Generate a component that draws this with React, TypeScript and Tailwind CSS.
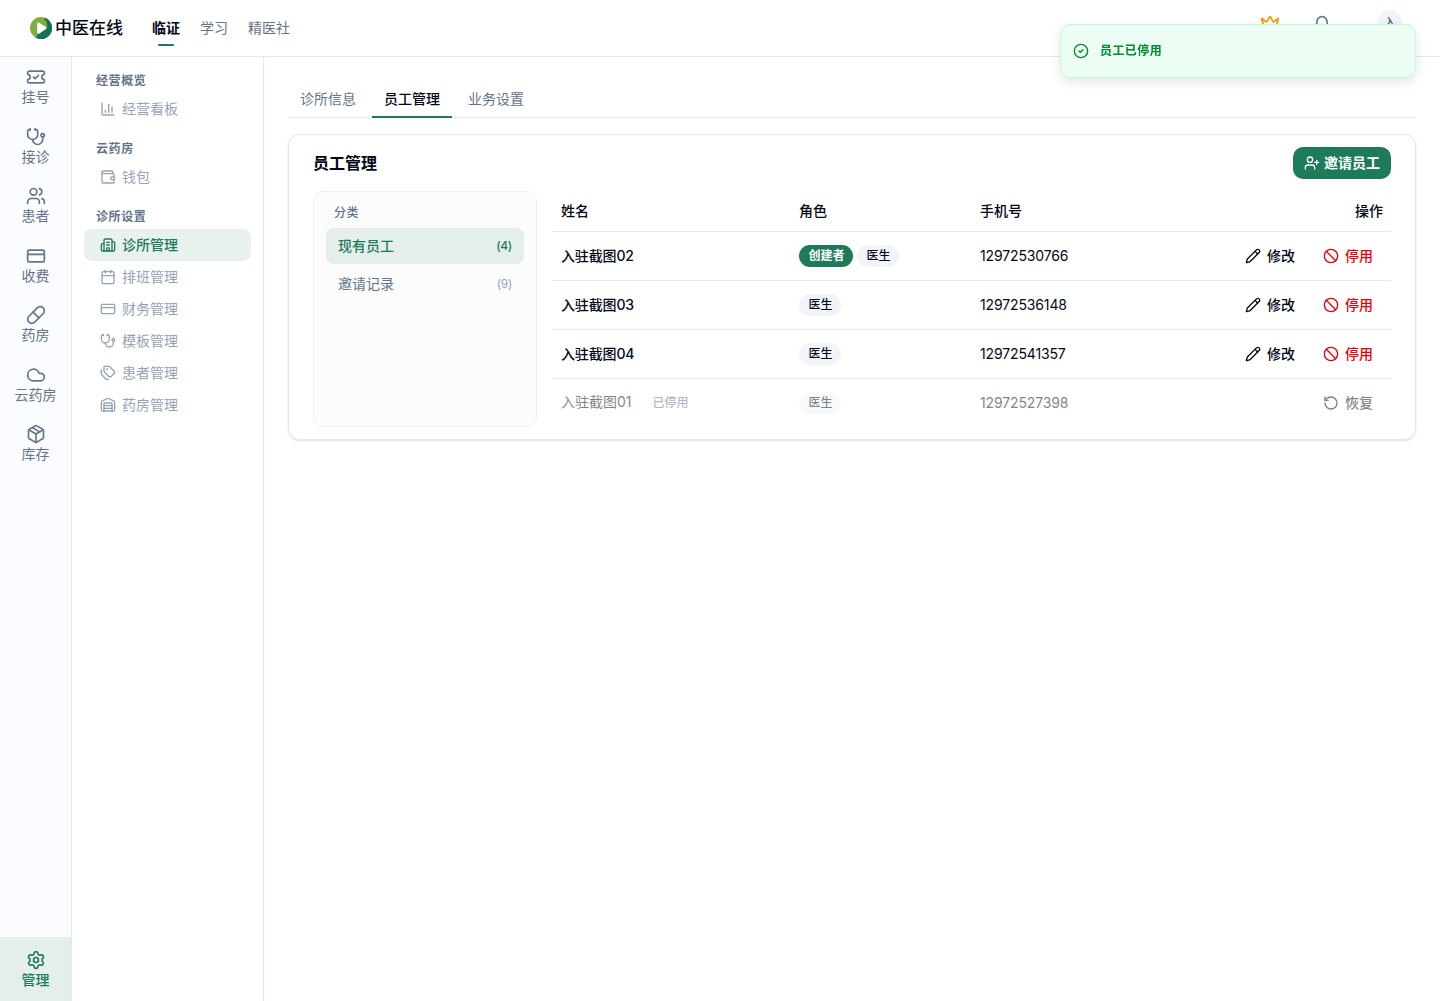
import {
  Ban,
  Bell,
  Building2,
  Calendar,
  ChartColumn,
  CircleCheck,
  Cloud,
  CreditCard,
  Crown,
  Package,
  Pencil,
  Pill,
  RotateCcw,
  Settings,
  Stethoscope,
  Tags,
  TicketCheck,
  UserPlus,
  Users,
  Wallet,
  Warehouse,
  type LucideIcon,
} from "lucide-react";
import clsx from "clsx";

const railItems: { label: string; icon: LucideIcon }[] = [
  { label: "挂号", icon: TicketCheck },
  { label: "接诊", icon: Stethoscope },
  { label: "患者", icon: Users },
  { label: "收费", icon: CreditCard },
  { label: "药房", icon: Pill },
  { label: "云药房", icon: Cloud },
  { label: "库存", icon: Package },
];

const menuSections: {
  title: string;
  items: { label: string; icon: LucideIcon; active?: boolean }[];
}[] = [
  { title: "经营概览", items: [{ label: "经营看板", icon: ChartColumn }] },
  { title: "云药房", items: [{ label: "钱包", icon: Wallet }] },
  {
    title: "诊所设置",
    items: [
      { label: "诊所管理", icon: Building2, active: true },
      { label: "排班管理", icon: Calendar },
      { label: "财务管理", icon: CreditCard },
      { label: "模板管理", icon: Stethoscope },
      { label: "患者管理", icon: Tags },
      { label: "药房管理", icon: Warehouse },
    ],
  },
];

const staff = [
  { name: "入驻截图02", owner: true, phone: "12972530766" },
  { name: "入驻截图03", phone: "12972536148" },
  { name: "入驻截图04", phone: "12972541357" },
  { name: "入驻截图01", phone: "12972527398", disabled: true },
];

function Logo() {
  return (
    <svg viewBox="0 0 22 22" className="size-[22px]">
      <circle cx="11" cy="11" r="11" fill="#7fae42" />
      <path
        d="M15.5 1A11 11 0 1 1 5.6 20.6C7.2 19.8 7.7 18 7.4 16L17 11C17.6 7 17 3.4 13.8 2.2Z"
        fill="#12705a"
      />
      <path
        d="M7.2 6.6c0-1 1-1.4 1.8-.9l7 4.4c.8.5.8 1.5 0 2l-7 4.6c-.8.5-1.8.1-1.8-.9z"
        fill="#fff"
      />
    </svg>
  );
}

function Header() {
  return (
    <header className="flex h-[57px] shrink-0 items-center border-b border-[#e2e8f0] bg-white pl-[30px] pr-[38px]">
      <div className="flex items-center gap-[3px]">
        <Logo />
        <span className="w-[68px] whitespace-nowrap text-[17px] font-medium leading-6">
          中医在线
        </span>
      </div>
      <nav className="ml-[29px] flex gap-5 text-sm text-[#64748b]">
        <div className="relative font-semibold text-[#020817]">
          临证
          <span className="absolute -bottom-2 left-1/2 h-0.5 w-4 -translate-x-1/2 rounded-full bg-[#1d7b5a]" />
        </div>
        <div>学习</div>
        <div>精医社</div>
      </nav>
      <div className="mb-3 ml-auto flex items-center">
        <Crown className="mt-1 size-5 text-[#ff9800]" />
        <Bell className="ml-8 mt-1.5 size-5 text-[#64748b]" />
        <div className="ml-[46px] flex size-6 items-center justify-center rounded-full bg-[#f1f5f9] pt-0.5 text-xs text-[#334155]">
          入
        </div>
      </div>
    </header>
  );
}

function Rail() {
  return (
    <aside className="flex w-[72px] shrink-0 flex-col border-r border-[#e2e8f0] bg-[#fafcff] text-sm text-[#64748b]">
      {railItems.map(({ label, icon: Icon }) => (
        <div key={label} className="flex h-[59.5px] flex-col items-center pt-2.5">
          <Icon className="size-5" />
          <span className="leading-[19.5px]">{label}</span>
        </div>
      ))}
      <div className="mt-auto flex h-16 flex-col items-center bg-[#e4eeeb] pt-[13px] font-medium text-[#1d7b5a]">
        <Settings className="size-5" />
        <span className="leading-5">管理</span>
      </div>
    </aside>
  );
}

function SideMenu() {
  return (
    <aside className="flex w-48 shrink-0 flex-col gap-2.5 border-r border-[#e2e8f0] bg-white px-3 pt-2.5">
      {menuSections.map((section) => (
        <div key={section.title}>
          <div className="flex h-[26px] items-center px-3 pt-0.5 text-xs font-semibold tracking-wider text-[#64748b]">
            {section.title}
          </div>
          {section.items.map(({ label, icon: Icon, active }) => (
            <div
              key={label}
              className={clsx(
                "flex h-8 items-center gap-1.5 rounded-lg px-4 text-sm",
                active ? "bg-[#e8f1ee] font-medium text-[#1d7b5a]" : "text-[#94a3b8]",
              )}
            >
              <Icon className="size-4" />
              {label}
            </div>
          ))}
        </div>
      ))}
    </aside>
  );
}

function Tabs() {
  return (
    <div className="flex h-[37px] gap-1 border-b border-[#e2e8f0] text-sm text-[#64748b]">
      <div className="px-3 pt-2">诊所信息</div>
      <div className="h-[37px] border-b-2 border-[#1d7b5a] px-3 pt-2 font-medium text-[#020817]">
        员工管理
      </div>
      <div className="px-3 pt-2">业务设置</div>
    </div>
  );
}

function Categories() {
  return (
    <div className="h-[236px] w-56 shrink-0 rounded-[10px] border border-[#edf1f6] bg-[#fcfcfd] px-3 text-sm">
      <div className="flex h-9 items-center px-2 pt-1.5 text-xs font-medium tracking-wider text-[#64748b]">
        分类
      </div>
      <div className="flex h-9 items-center justify-between rounded-lg bg-[#e4eeeb] px-3 font-medium text-[#1d7b5a]">
        现有员工
        <span className="text-xs tracking-tight">(4)</span>
      </div>
      <div className="mt-0.5 flex h-9 items-center justify-between px-3 text-[#64748b]">
        邀请记录
        <span className="text-xs tracking-tight text-[#94a3b8]">(9)</span>
      </div>
    </div>
  );
}

function Action({ icon: Icon, label, danger }: { icon: LucideIcon; label: string; danger?: boolean }) {
  return (
    <button
      className={clsx("flex h-8 items-center gap-1.5 px-2.5 font-medium", danger && "text-[#e7000b]")}
    >
      <Icon className="size-4" />
      {label}
    </button>
  );
}

function StaffTable() {
  return (
    <table className="h-[236px] w-[838px] table-fixed border-separate border-spacing-0 text-left text-sm">
      <colgroup>
        <col className="w-[238px]" />
        <col className="w-[181px]" />
        <col className="w-[200px]" />
        <col />
      </colgroup>
      <thead>
        <tr className="h-[41px] [&>th]:border-b [&>th]:border-[#e2e8f0] [&>th]:px-2 [&>th]:font-medium">
          <th>姓名</th>
          <th>角色</th>
          <th>手机号</th>
          <th className="text-right">操作</th>
        </tr>
      </thead>
      <tbody>
        {staff.map((row) => (
          <tr
            key={row.name}
            className={clsx(
              "[&>td]:border-[#e2e8f0] [&>td]:px-2",
              row.disabled ? "h-12 opacity-50" : "h-[49px] [&>td]:border-b",
            )}
          >
            <td className={row.disabled ? "pb-0.5" : "font-medium tracking-[-0.01em]"}>
              {row.name}
              {row.disabled && (
                <span className="ml-[21px] text-xs font-medium text-[#64748b]">已停用</span>
              )}
            </td>
            <td>
              <div className="flex gap-1 text-xs leading-4">
                {row.owner && (
                  <span className="h-[22px] w-[54px] rounded-full bg-[#1d7b5a] pl-px pt-[3px] text-center font-bold text-white">
                    创建者
                  </span>
                )}
                <span className="h-[22px] w-[42px] rounded-full bg-[#f1f5f9] pl-px pt-[3px] text-center font-medium">
                  医生
                </span>
              </div>
            </td>
            <td className="tracking-[-0.01em]">{row.phone}</td>
            <td>
              <div className="flex justify-end gap-2">
                {row.disabled ? (
                  <Action icon={RotateCcw} label="恢复" />
                ) : (
                  <>
                    <Action icon={Pencil} label="修改" />
                    <Action icon={Ban} label="停用" danger />
                  </>
                )}
              </div>
            </td>
          </tr>
        ))}
      </tbody>
    </table>
  );
}

function Toast() {
  return (
    <div className="fixed right-6 top-6 flex h-[54px] w-[356px] items-center gap-[11px] rounded-[10px] border border-[#bffcd9] bg-[#ecfdf3] px-3 text-xs font-semibold tracking-[0.035em] text-[#008a2e] shadow-[0_4px_12px_rgba(0,0,0,0.1)]">
      <CircleCheck className="size-4" />
      员工已停用
    </div>
  );
}

export default function App() {
  return (
    <div className="flex h-screen flex-col overflow-hidden bg-white font-['Inter','Noto_Sans_CJK_SC',sans-serif] text-[#020817]">
      <Header />
      <div className="flex min-h-0 flex-1">
        <Rail />
        <SideMenu />
        <main className="min-w-0 flex-1 p-6">
          <Tabs />
          <section className="mt-4 h-[306px] rounded-xl border border-[#e2e8f0] px-6 pt-3 shadow-sm">
            <div className="flex items-center justify-between">
              <h1 className="text-base font-semibold">员工管理</h1>
              <button className="flex h-8 items-center gap-1 rounded-[10px] bg-[#1d7b5a] px-[11px] text-sm font-semibold text-white">
                <UserPlus className="size-4" />
                邀请员工
              </button>
            </div>
            <div className="mt-3 flex gap-4">
              <Categories />
              <StaffTable />
            </div>
          </section>
        </main>
      </div>
      <Toast />
    </div>
  );
}
